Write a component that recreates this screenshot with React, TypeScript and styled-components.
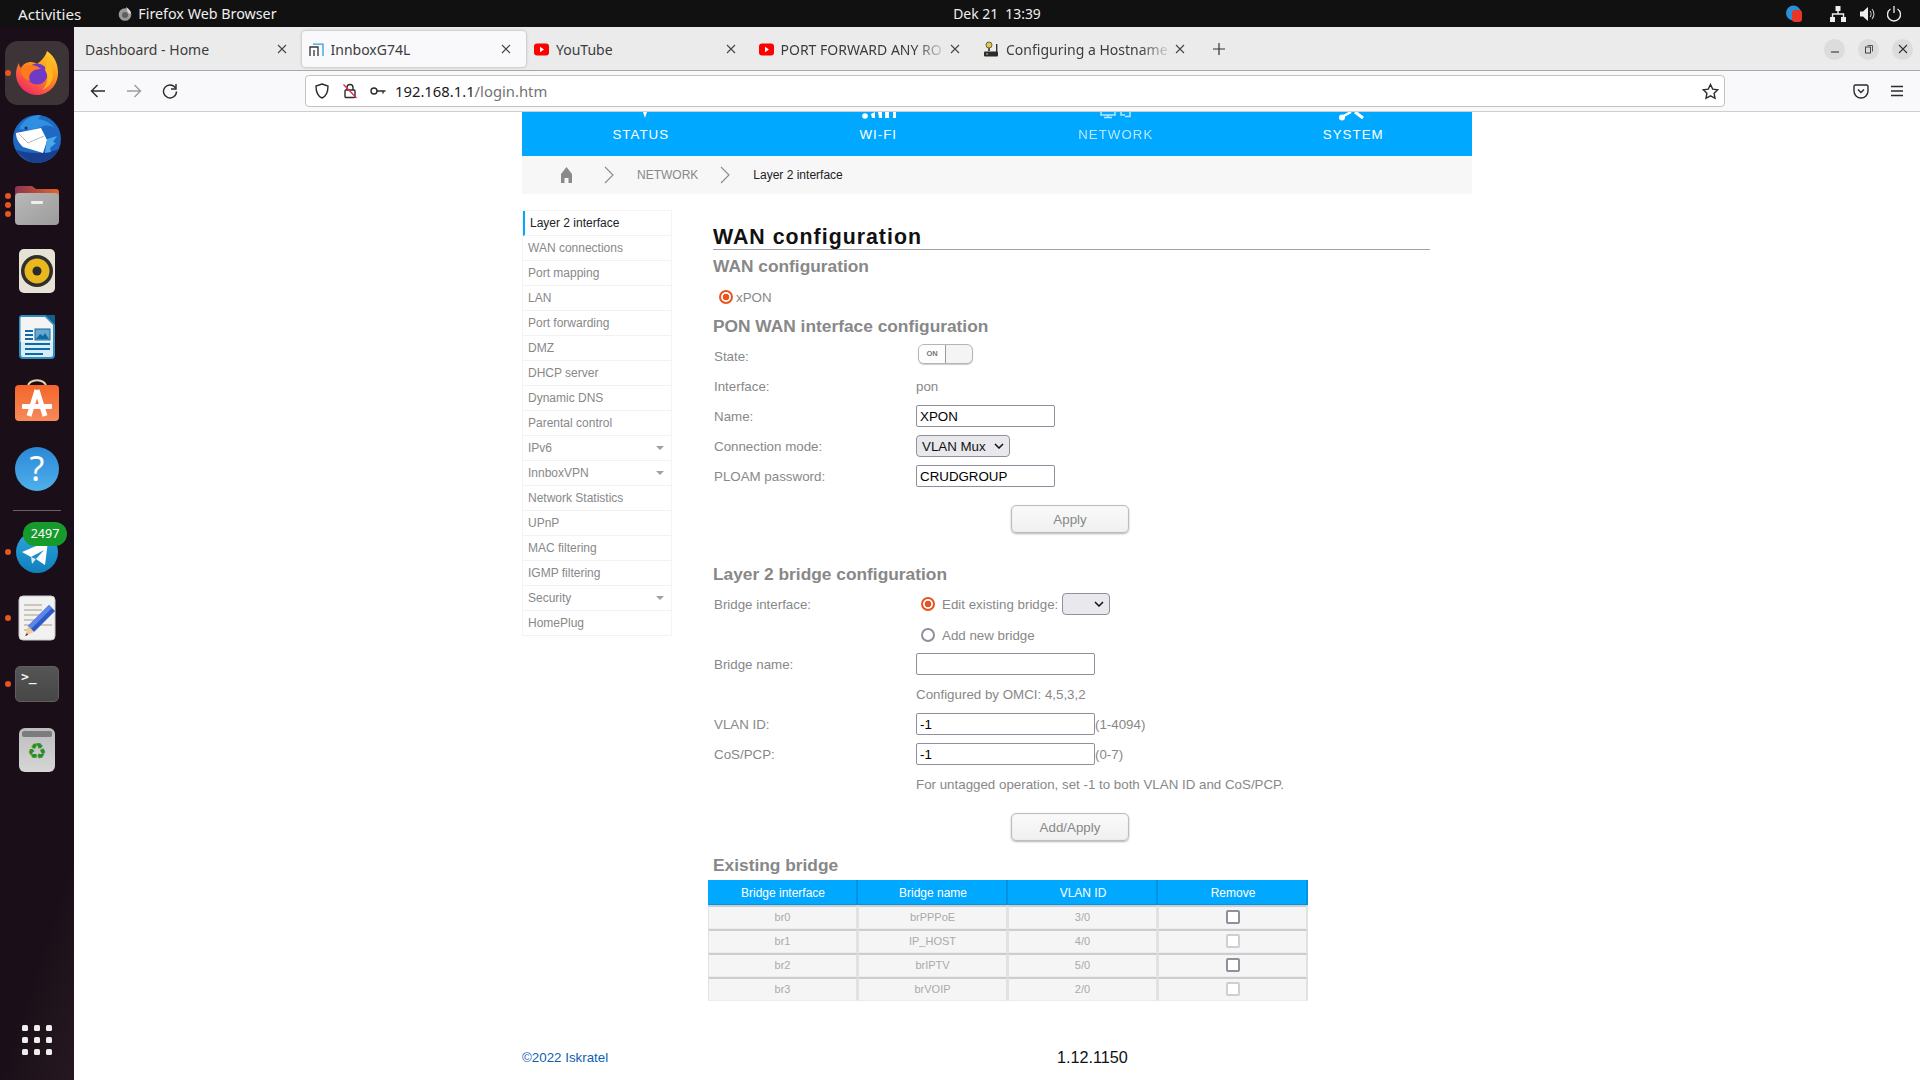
import React from "react";
import styled, { createGlobalStyle } from "styled-components";

const Global = createGlobalStyle`
  html, body { margin: 0; padding: 0; width: 1920px; height: 1080px; overflow: hidden; background: #fff; }
  * { box-sizing: border-box; }
  #root { width: 1920px; height: 1080px; }
`;

const UI = `"Noto Sans", "Open Sans", sans-serif`;
const WEB = `"Liberation Sans", Arial, sans-serif`;

const Screen = styled.div`
  width: 1920px;
  height: 1080px;
  display: flex;
  flex-direction: column;
  overflow: hidden;
`;

/* ---------- GNOME top bar ---------- */
const TopBar = styled.header`
  height: 27px;
  flex: none;
  background: #111111;
  color: #eeeeee;
  font: 14.3px ${UI};
  display: grid;
  grid-template-columns: 1fr auto 1fr;
  align-items: center;
`;
const TopLeft = styled.div`
  display: flex;
  align-items: center;
  padding-left: 18px;
`;
const Activities = styled.span`
  font-size: 15.2px;
`;
const AppMenu = styled.div`
  display: flex;
  align-items: center;
  gap: 6px;
  margin-left: 37px;
`;
const Clock = styled.div`
  white-space: pre;
  font-size: 13.9px;
  margin-left: 74px;
`;
const Tray = styled.div`
  display: flex;
  align-items: center;
  justify-content: flex-end;
  padding-right: 18px;
`;
const TrayIcon = styled.svg<{ $gap?: number }>`
  display: block;
  margin-left: ${(p) => p.$gap ?? 0}px;
`;

/* ---------- layout below the bar ---------- */
const Desk = styled.div`
  flex: 1;
  min-height: 0;
  display: flex;
`;

/* ---------- dock ---------- */
const Dock = styled.nav`
  width: 74px;
  flex: none;
  background: linear-gradient(108deg, #1a0f18 0%, #1a0f18 82%, #261821 100%);
  display: flex;
  flex-direction: column;
  align-items: center;
  padding-top: 13px;
  padding-bottom: 25px;
`;
const Slot = styled.div<{ $active?: boolean }>`
  position: relative;
  width: 74px;
  height: 66px;
  display: flex;
  align-items: center;
  justify-content: center;
  &::before {
    content: "";
    display: ${(p) => (p.$active ? "block" : "none")};
    position: absolute;
    left: 5px;
    top: 1px;
    width: 64px;
    height: 64px;
    border-radius: 13px;
    background: #3d3438;
  }
  svg { position: relative; }
`;
const Pips = styled.div`
  position: absolute;
  left: 5px;
  top: 50%;
  transform: translateY(-50%);
  display: flex;
  flex-direction: column;
  gap: 3px;
`;
const Pip = styled.span`
  display: block;
  width: 6px;
  height: 6px;
  border-radius: 50%;
  background: #e95420;
`;
const DockRule = styled.div`
  width: 48px;
  height: 1px;
  background: #6a6268;
  margin: 8px 0 8px;
  flex: none;
`;
const Badge = styled.span`
  position: absolute;
  left: 23px;
  top: 3px;
  width: 44px;
  height: 24px;
  border-radius: 12px;
  background: #169a2c;
  color: #fff;
  font: 12.5px/24px ${UI};
  text-align: center;
`;
const AppGrid = styled.div`
  margin-top: auto;
  display: grid;
  grid-template-columns: repeat(3, 6px);
  grid-auto-rows: 6px;
  gap: 6px;
`;
const AppDot = styled.span`
  background: #eeeeee;
  border-radius: 1.5px;
`;

/* ---------- browser chrome ---------- */
const Browser = styled.div`
  flex: 1;
  min-width: 0;
  display: flex;
  flex-direction: column;
`;
const TabStrip = styled.div`
  height: 44px;
  flex: none;
  background: #ebebeb;
  border-bottom: 1px solid #a9a9a9;
  display: flex;
  align-items: center;
  padding: 1px 0 0 3px;
`;
const Tab = styled.div<{ $active?: boolean }>`
  width: 224.5px;
  height: 36px;
  flex: none;
  display: flex;
  align-items: center;
  padding: 0 15px 0 ${(p) => (p.$active ? 7 : 8)}px;
  border-radius: 4px;
  background: ${(p) => (p.$active ? "#f9f9fb" : "transparent")};
  box-shadow: ${(p) => (p.$active ? "0 0 3px rgba(0,0,0,.3)" : "none")};
  color: #3c3c3c;
  font: 14px ${UI};
  gap: 7px;
`;
const TabTitle = styled.span<{ $fade?: boolean }>`
  flex: 1;
  min-width: 0;
  white-space: nowrap;
  ${(p) =>
    p.$fade
      ? `margin-right: -5px; mask-image: linear-gradient(to right, #000 80%, transparent 100%);`
      : "overflow: hidden;"}
`;
const NewTab = styled.div`
  margin-left: 12px;
  display: flex;
`;
const WinButtons = styled.div`
  margin-left: auto;
  display: flex;
  gap: 13px;
  padding-right: 7px;
`;
const WinButton = styled.div`
  width: 21px;
  height: 21px;
  border-radius: 50%;
  background: #dcdcdc;
  display: flex;
  align-items: center;
  justify-content: center;
`;
const NavBar = styled.div`
  height: 41px;
  flex: none;
  background: #f9f9fb;
  border-bottom: 1px solid #cfcfcf;
  display: flex;
  align-items: center;
  padding-left: 16px;
`;
const NavBtn = styled.div`
  width: 16px;
  height: 16px;
  margin-right: 20px;
  display: flex;
`;
const UrlBar = styled.div`
  width: 1420px;
  height: 32px;
  margin-left: 107px;
  background: #ffffff;
  border: 1px solid #c2c2c2;
  border-radius: 4px;
  display: flex;
  align-items: center;
  padding: 0 5px 0 8px;
  font: 14.8px ${UI};
`;
const UrlIcon = styled.div<{ $w?: number }>`
  width: ${(p) => p.$w ?? 28}px;
  flex: none;
  display: flex;
`;
const Host = styled.span`
  color: #1a1a1a;
`;
const Path = styled.span`
  color: #737373;
  flex: 1;
`;
const ToolIcons = styled.div`
  display: flex;
  gap: 20px;
  margin-left: 128px;
`;

/* ---------- router page ---------- */
const Page = styled.main`
  flex: 1;
  min-height: 0;
  overflow: hidden;
  background: #fff;
`;
const Sheet = styled.div`
  width: 950px;
  margin: 0 auto;
  font: 13.33px ${WEB};
  color: #888888;
`;
const MainNav = styled.div`
  height: 44px;
  background: #00a8ff;
  display: grid;
  grid-template-columns: repeat(4, 1fr);
`;
const MainNavItem = styled.div<{ $dim?: boolean }>`
  display: flex;
  flex-direction: column;
  align-items: center;
  color: #ffffff;
  opacity: ${(p) => (p.$dim ? 0.72 : 1)};
  font-size: 13.33px;
  letter-spacing: 1px;
`;
const NavGlyph = styled.svg`
  display: block;
  flex: none;
  width: 40px;
  height: 10px;
  margin-bottom: 5px;
`;
const Crumbs = styled.div`
  height: 38px;
  background: #f7f7f7;
  display: flex;
  align-items: center;
  padding-left: 38px;
  font-size: 12px;
  color: #888888;
`;
const CrumbGap = styled.span<{ $l: number }>`
  display: flex;
  margin-left: ${(p) => p.$l}px;
`;
const CrumbNow = styled.span`
  color: #222222;
`;
const Columns = styled.div`
  display: flex;
  align-items: flex-start;
`;
const SideMenu = styled.ul`
  list-style: none;
  margin: 16px 0 0;
  padding: 0;
  width: 150px;
  flex: none;
  border: 1px solid #f4f4f4;
  border-bottom-width: 0;
  font-size: 12px;
`;
const SideItem = styled.li<{ $active?: boolean }>`
  height: 25px;
  display: flex;
  align-items: center;
  justify-content: space-between;
  border-bottom: 1px solid #f2f2f2;
  padding: 0 7px 0 5px;
  color: ${(p) => (p.$active ? "#222222" : "#888888")};
  ${(p) => (p.$active ? "border-left: 2px solid #00a8ff;" : "")}
`;
const Caret = styled.span`
  width: 0;
  height: 0;
  border-left: 4px solid transparent;
  border-right: 4px solid transparent;
  border-top: 4px solid #a0a0a0;
`;
const Content = styled.section`
  width: 717px;
  margin-left: 41px;
  padding-top: 28px;
`;
const Title = styled.h1`
  margin: 0;
  height: 28px;
  border-bottom: 1px solid #a0a0a8;
  font: bold 21.33px/31px ${WEB};
  letter-spacing: 1px;
  color: #111111;
`;
const Heading = styled.h2<{ $h?: number; $top?: number; $drop?: number }>`
  margin: ${(p) => p.$top ?? 0}px 0 0;
  height: ${(p) => p.$h ?? 28}px;
  line-height: ${(p) => (p.$h ?? 28) + (p.$drop ?? 0)}px;
  font-size: 17.33px;
  font-weight: bold;
  color: #888888;
`;
const RadioLine = styled.label`
  height: 30px;
  display: flex;
  align-items: center;
  padding-left: 6px;
  gap: 3px;
`;
const Radio = styled.input.attrs({ type: "radio", readOnly: true })`
  appearance: none;
  margin: 0;
  flex: none;
  width: 14px;
  height: 14px;
  border-radius: 50%;
  border: 2px solid #8f8f9d;
  background: #fff;
  &:checked {
    border-color: #e95420;
    background: radial-gradient(circle, #e95420 0 3px, #fff 3.6px);
  }
`;
const Row = styled.div`
  height: 30px;
  display: flex;
  align-items: center;
  white-space: nowrap;
`;
const Label = styled.span`
  width: 203px;
  flex: none;
  padding-left: 1px;
`;
const Toggle = styled.div`
  width: 55px;
  height: 20px;
  margin: 0 0 4px 2px;
  display: grid;
  grid-template-columns: 27px 1fr;
  border: 1px solid #b5b5b5;
  border-radius: 6px;
  background: #f4f4f4;
  box-shadow: 0 1px 1px rgba(0, 0, 0, 0.2);
  overflow: hidden;
`;
const ToggleOn = styled.span`
  background: #fdfdfd;
  border-right: 1px solid #9a9a9a;
  font: bold 7.5px/18px ${WEB};
  text-align: center;
  color: #777777;
`;
const TextInput = styled.input.attrs({ type: "text", readOnly: true })<{ $w: number }>`
  width: ${(p) => p.$w}px;
  height: 22px;
  margin: 0;
  padding: 0 3px;
  border: 1px solid #8f8f9d;
  border-radius: 2px;
  background: #fff;
  color: #000;
  font: 13.33px ${WEB};
  outline: none;
`;
const Select = styled.div<{ $w: number; $l?: number }>`
  width: ${(p) => p.$w}px;
  height: 22px;
  margin-left: ${(p) => p.$l ?? 0}px;
  display: flex;
  align-items: center;
  justify-content: space-between;
  padding: 0 5px 0 5px;
  border: 1px solid #8f8f9d;
  border-radius: 4px;
  background: #e9e9ed;
  color: #111;
  font-size: 13.33px;
`;
const RadioField = styled.label<{ $nudge?: boolean }>`
  display: flex;
  align-items: center;
  gap: 7px;
  padding-left: 5px;
  margin-top: ${(p) => (p.$nudge ? 2 : 0)}px;
`;
const ButtonRow = styled.div<{ $top: number }>`
  padding: ${(p) => p.$top}px 0 0 298px;
`;
const Button = styled.button`
  display: block;
  width: 118px;
  height: 28px;
  padding: 0;
  border: 1px solid #bdbdbd;
  border-radius: 5px;
  background: linear-gradient(#fafafa, #f0f0f0);
  box-shadow: 0 1px 2px rgba(0, 0, 0, 0.3), inset 0 0 1px #cccccc;
  color: #888888;
  font: 13.33px ${WEB};
`;
const BridgeTable = styled.table`
  width: 600px;
  margin: 1px 0 0 -5px;
  table-layout: fixed;
  border-collapse: separate;
  border-spacing: 0;
  font-size: 11px;
`;
const Th = styled.th`
  height: 25px;
  padding: 0;
  background: #00a8ff;
  box-shadow: inset -2px 0 0 #0093e0, inset 0 -1px 0 #0093e0;
  color: #fff;
  font: normal 12px ${WEB};
  text-align: center;
`;
const Td = styled.td`
  height: 24px;
  padding: 0 0 1px;
  background: #f5f5f5;
  border-top: 2px solid #cdcdcd;
  border-left: 1px solid #e2e2e2;
  border-right: 2px solid #e2e2e2;
  border-bottom: 1px solid #ececec;
  color: #aaaaaa;
  text-align: center;
  vertical-align: middle;
`;
const Check = styled.input.attrs({ type: "checkbox", readOnly: true })`
  appearance: none;
  display: block;
  margin: 0 auto;
  width: 14px;
  height: 14px;
  border: 2px solid #8f8f9d;
  border-radius: 2px;
  background: #fff;
  &:disabled { border-color: #cfcfd3; }
`;
const Footer = styled.footer`
  margin-top: 45px;
  height: 22px;
  display: grid;
  grid-template-columns: 535px 1fr;
  align-items: center;
`;
const Copyright = styled.span`
  color: #0f5fb0;
  font-size: 13.33px;
`;
const Version = styled.span`
  color: #111;
  font-size: 16.2px;
`;

/* ---------- dock drawings ---------- */
const FirefoxIcon = () => (
  <svg width="48" height="48" viewBox="0 0 48 48">
    <defs>
      <linearGradient id="ffa" x1="0.8" y1="0" x2="0.2" y2="1">
        <stop offset="0" stopColor="#ffd02a" />
        <stop offset="0.45" stopColor="#ff8a1e" />
        <stop offset="1" stopColor="#f01f6a" />
      </linearGradient>
    </defs>
    <path d="M34 2c9 6 11 15 11 22 0 12-9.5 22-21 22S3 36 3 25c0-4 1-8 3-11 0 3 1 4 2 5 2-4 6-6 10-6 2 0 5 1 6 2 4-3 9-8 10-13z" fill="url(#ffa)" />
    <circle cx="24" cy="25" r="10.5" fill="#6f3ac8" />
    <path d="M8 21c4-5 10-6 15-4 3 1 5 3 5 3s-5 0-8 2c-3 2-5 6-3 10-6-2-9-6-9-11z" fill="#ff7a18" />
    <path d="M34 12c5 4 6 10 6 14 0 7-5 13-11 15 6-5 7-14 3-20z" fill="#ffb51e" />
  </svg>
);
const ThunderbirdIcon = () => (
  <svg width="48" height="48" viewBox="0 0 48 48">
    <circle cx="24" cy="24" r="24" fill="#1d69c4" />
    <path d="M3 35c6 8 14 13 21 13 9 0 18-5 22-14-8 4-28 6-43 1z" fill="#1b3f8f" />
    <path d="M6 14C10 5 18 0 28 0l-3 4c7 1 13 4 17 9-6-3-10-3-14-1-7 3-15 3-22 2z" fill="#2f8fe0" />
    <circle cx="13" cy="13" r="1.500" fill="#12306e" />
    <path d="M3 18l25-5 6 12c-1 5-3 9-4 13L10 32C6 28 3 24 3 18z" fill="#ffffff" />
    <path d="M6 19l9 9 16-7" fill="none" stroke="#b4b4c0" strokeWidth="1" />
    <path d="M34 24l10-3-4 6 3 1-6 5 1 4-6 1z" fill="#49a7ea" />
  </svg>
);
const FilesIcon = () => (
  <svg width="48" height="48" viewBox="0 0 48 48">
    <defs>
      <linearGradient id="fold" x1="0" y1="0" x2="1" y2="0">
        <stop offset="0" stopColor="#8b3550" />
        <stop offset="1" stopColor="#e4642a" />
      </linearGradient>
      <linearGradient id="foldf" x1="0" y1="0" x2="1" y2="1">
        <stop offset="0" stopColor="#b8b8b8" />
        <stop offset="1" stopColor="#9c9c9c" />
      </linearGradient>
    </defs>
    <path d="M2 8a3 3 0 0 1 3-3h14l4 3h20a3 3 0 0 1 3 3v6H2z" fill="url(#fold)" />
    <rect x="2" y="12" width="44" height="32" rx="4" fill="url(#foldf)" />
    <rect x="18" y="20" width="12" height="3" rx="1" fill="#eeeeee" />
  </svg>
);
const RhythmboxIcon = () => (
  <svg width="48" height="48" viewBox="0 0 48 48">
    <rect x="6" y="2" width="36" height="44" rx="5" fill="#e6e2d5" />
    <circle cx="24" cy="24" r="16" fill="#2f2f2f" />
    <circle cx="24" cy="24" r="12.5" fill="#e8b81e" />
    <circle cx="24" cy="24" r="4.5" fill="#2b2b2b" />
  </svg>
);
const WriterIcon = () => (
  <svg width="48" height="48" viewBox="0 0 48 48">
    <path d="M9 2h24l9 9v31a4 4 0 0 1-4 4H10a4 4 0 0 1-4-4V5a3 3 0 0 1 3-3z" fill="#2c8fbf" />
    <path d="M8 4h24l8 8v17H7.500V5z" fill="#f4f4f4" />
    <path d="M8 29h32v13a2 2 0 0 1-2 2H10a2 2 0 0 1-2-2z" fill="#d8edf6" />
    <path d="M33 2l9 9V3a1 1 0 0 0-1-1z" fill="#155f8e" />
    <rect x="12" y="17" width="8" height="2" fill="#0e6aa8" />
    <rect x="12" y="21" width="8" height="2" fill="#0e6aa8" />
    <rect x="12" y="25" width="8" height="2" fill="#0e6aa8" />
    <rect x="12" y="30" width="25" height="2" fill="#0e6aa8" />
    <rect x="12" y="35" width="25" height="2" fill="#0e6aa8" />
    <rect x="12" y="40" width="18" height="2" fill="#0e6aa8" />
    <rect x="22" y="16" width="15" height="11" fill="#6aa7cc" stroke="#0e6aa8" strokeWidth="1" />
    <path d="M23 26l4-5 3 2 2-3 4 6z" fill="#0e6aa8" />
  </svg>
);
const StoreIcon = () => (
  <svg width="48" height="48" viewBox="0 0 48 48">
    <defs>
      <linearGradient id="bag" x1="0" y1="0" x2="0" y2="1">
        <stop offset="0" stopColor="#f5652a" />
        <stop offset="1" stopColor="#f68a5c" />
      </linearGradient>
    </defs>
    <path d="M15 8c0-9 18-9 18 0" fill="none" stroke="#e8d2b0" strokeWidth="2" />
    <rect x="2" y="6" width="44" height="36" rx="4" fill="url(#bag)" />
    <path d="M24 11l-8 26M24 11l8 26" fill="none" stroke="#fff" strokeWidth="5" />
    <rect x="9" y="25" width="30" height="5" rx="1" fill="#fff" />
  </svg>
);
const HelpSvg = styled.svg`
  font-family: "Noto Sans", sans-serif;
`;
const HelpIcon = () => (
  <HelpSvg width="48" height="48" viewBox="0 0 48 48">
    <defs>
      <linearGradient id="hlp" x1="0" y1="0" x2="0" y2="1">
        <stop offset="0" stopColor="#2b88d8" />
        <stop offset="1" stopColor="#4fb0ea" />
      </linearGradient>
    </defs>
    <circle cx="24" cy="24" r="22" fill="url(#hlp)" />
    <text x="24" y="36" textAnchor="middle" fontSize="34" fill="#fff">?</text>
  </HelpSvg>
);
const TelegramIcon = () => (
  <svg width="48" height="48" viewBox="0 0 48 48">
    <defs>
      <linearGradient id="tg" x1="0" y1="0" x2="0" y2="1">
        <stop offset="0" stopColor="#2fa5de" />
        <stop offset="1" stopColor="#0f7fbb" />
      </linearGradient>
    </defs>
    <circle cx="24" cy="24" r="21" fill="url(#tg)" />
    <path d="M9 24l26-11-3 24-9-6 8-9-13 7z" fill="#fff" />
    <path d="M18 29l5 2-4 5z" fill="#d5e8f3" />
  </svg>
);
const GeditIcon = () => (
  <svg width="48" height="48" viewBox="0 0 48 48">
    <rect x="6" y="2" width="36" height="44" rx="4" fill="#f1f1f1" stroke="#c9c9c9" strokeWidth="1" />
    <g fill="#cbc6b8">
      <rect x="11" y="10" width="18" height="2" />
      <rect x="11" y="15" width="18" height="2" />
      <rect x="11" y="20" width="18" height="2" />
      <rect x="11" y="25" width="14" height="2" />
      <rect x="11" y="30" width="28" height="2" />
      <rect x="11" y="35" width="10" height="2" />
    </g>
    <path d="M36 11l6 6-21 21-6-6z" fill="#2b59c9" />
    <path d="M36 11l3 3-21 21-3-3z" fill="#5f86e6" />
    <path d="M15 32l6 6-9 4z" fill="#f2c79a" />
    <path d="M14 39l-2 3 3-1z" fill="#333" />
  </svg>
);
const TermBox = styled.div`
  width: 44px;
  height: 36px;
  border-radius: 5px;
  background: linear-gradient(#555555, #464646);
  border: 1px solid #5f5f5f;
  color: #f3f3f3;
  font: bold 13px/20px "DejaVu Sans Mono", monospace;
  padding-left: 5px;
`;
const TrashBox = styled.div`
  width: 36px;
  height: 44px;
  border-radius: 6px;
  background: linear-gradient(#bdbdbd, #d6d6d6);
  display: flex;
  flex-direction: column;
  align-items: center;
  padding-top: 3px;
`;
const TrashLid = styled.span`
  width: 30px;
  height: 6px;
  border-radius: 2px;
  background: #7c7c7c;
`;
const TrashMark = styled.span`
  font: 22px/30px "DejaVu Sans", sans-serif;
  color: #2a8f22;
`;

/* ---------- chrome glyphs ---------- */
const S = { fill: "none", stroke: "#2b2b2b", strokeWidth: 1.4 } as const;
const CloseX = ({ c = "#444" }: { c?: string }) => (
  <svg width="10" height="10" viewBox="0 0 10 10" style={{ flex: "none" }}>
    <path d="M1 1l8 8M9 1L1 9" stroke={c} strokeWidth="1.1" fill="none" />
  </svg>
);
const YouTubeFav = () => (
  <svg width="15" height="15" viewBox="0 0 15 15" style={{ flex: "none" }}>
    <rect x="0" y="1.5" width="15" height="12" rx="3" fill="#ff0000" />
    <path d="M6 4.8l4 2.7-4 2.7z" fill="#fff" />
  </svg>
);
const InnboxFav = () => (
  <svg width="15" height="15" viewBox="0 0 15 15" style={{ flex: "none" }}>
    <path d="M1 14V5h8v9" fill="none" stroke="#333" strokeWidth="1.3" />
    <path d="M5 14V8" stroke="#333" strokeWidth="1.3" />
    <path d="M4 2.2h10V14" fill="none" stroke="#2aa0dd" strokeWidth="1.3" />
  </svg>
);
const RouterFav = () => (
  <svg width="16" height="16" viewBox="0 0 16 16" style={{ flex: "none" }}>
    <circle cx="6" cy="4" r="3" fill="#e8c93a" stroke="#444" strokeWidth="0.8" />
    <rect x="5" y="7" width="2" height="3" fill="#555" />
    <rect x="13" y="3" width="1.4" height="8" fill="#333" />
    <rect x="1" y="10.5" width="14" height="5" rx="1" fill="#2b2b2b" />
    <rect x="3" y="12.5" width="2" height="1" fill="#e8c93a" />
  </svg>
);

const menu = [
  "Layer 2 interface",
  "WAN connections",
  "Port mapping",
  "LAN",
  "Port forwarding",
  "DMZ",
  "DHCP server",
  "Dynamic DNS",
  "Parental control",
  "IPv6",
  "InnboxVPN",
  "Network Statistics",
  "UPnP",
  "MAC filtering",
  "IGMP filtering",
  "Security",
  "HomePlug",
];
const carets = new Set(["IPv6", "InnboxVPN", "Security"]);
const bridges = [
  ["br0", "brPPPoE", "3/0", false],
  ["br1", "IP_HOST", "4/0", true],
  ["br2", "brIPTV", "5/0", false],
  ["br3", "brVOIP", "2/0", true],
] as const;

const Chevron = () => (
  <svg width="10" height="18" viewBox="0 0 10 18">
    <path d="M1 1l8 8-8 8" fill="none" stroke="#8a8a8a" strokeWidth="1.1" />
  </svg>
);

export default function App() {
  return (
    <Screen>
      <Global />
      <TopBar>
        <TopLeft>
          <Activities>Activities</Activities>
          <AppMenu>
            <svg width="14" height="14" viewBox="0 0 14 14">
              <circle cx="7" cy="7.5" r="6.3" fill="#9a9a9a" />
              <circle cx="7" cy="8" r="3" fill="#5e5e5e" />
              <path d="M8 0c3 2 5 4 5 7l-3-1z" fill="#d8d8d8" />
            </svg>
            <span>Firefox Web Browser</span>
          </AppMenu>
        </TopLeft>
        <Clock>Dek 21  13:39</Clock>
        <Tray>
          <TrayIcon width="16" height="18" viewBox="0 0 16 18">
            <circle cx="7.5" cy="8" r="7.5" fill="#2a8fd8" />
            <rect x="6" y="5" width="10" height="12" rx="3" fill="#e8352a" />
          </TrayIcon>
          <TrayIcon $gap={28} width="16" height="16" viewBox="0 0 16 16">
            <path d="M5.5 0h5v5h-5zM0 11h5v5H0zM11 11h5v5h-5z" fill="#eee" />
            <path d="M8 5v3M2.5 11V8h11v3" fill="none" stroke="#eee" strokeWidth="1.4" />
          </TrayIcon>
          <TrayIcon $gap={14} width="16" height="16" viewBox="0 0 16 16">
            <path d="M0 5.5h3L8 1v14L3 10.5H0z" fill="#eee" />
            <path d="M10 5c1.4 1.6 1.4 4.4 0 6M12 3c2.6 2.8 2.6 7.200 0 10" fill="none" stroke="#ccc" strokeWidth="1.1" />
          </TrayIcon>
          <TrayIcon $gap={10} width="16" height="16" viewBox="0 0 16 16">
            <path d="M4.500 3a6.500 6.500 0 1 0 7 0M8 0v7" fill="none" stroke="#eee" strokeWidth="1.3" />
          </TrayIcon>
        </Tray>
      </TopBar>

      <Desk>
        <Dock>
          <Slot $active>
            <Pips><Pip /></Pips>
            <FirefoxIcon />
          </Slot>
          <Slot><ThunderbirdIcon /></Slot>
          <Slot>
            <Pips><Pip /><Pip /><Pip /></Pips>
            <FilesIcon />
          </Slot>
          <Slot><RhythmboxIcon /></Slot>
          <Slot><WriterIcon /></Slot>
          <Slot><StoreIcon /></Slot>
          <Slot><HelpIcon /></Slot>
          <DockRule />
          <Slot>
            <Pips><Pip /></Pips>
            <TelegramIcon />
            <Badge>2497</Badge>
          </Slot>
          <Slot>
            <Pips><Pip /></Pips>
            <GeditIcon />
          </Slot>
          <Slot>
            <Pips><Pip /></Pips>
            <TermBox>&gt;_</TermBox>
          </Slot>
          <Slot>
            <TrashBox>
              <TrashLid />
              <TrashMark>♻</TrashMark>
            </TrashBox>
          </Slot>
          <AppGrid>
            {Array.from({ length: 9 }, (_, i) => (
              <AppDot key={i} />
            ))}
          </AppGrid>
        </Dock>

        <Browser>
          <TabStrip>
            <Tab>
              <TabTitle>Dashboard - Home</TabTitle>
              <CloseX />
            </Tab>
            <Tab $active>
              <InnboxFav />
              <TabTitle>InnboxG74L</TabTitle>
              <CloseX />
            </Tab>
            <Tab>
              <YouTubeFav />
              <TabTitle>YouTube</TabTitle>
              <CloseX />
            </Tab>
            <Tab>
              <YouTubeFav />
              <TabTitle $fade>PORT FORWARD ANY RO</TabTitle>
              <CloseX />
            </Tab>
            <Tab>
              <RouterFav />
              <TabTitle $fade>Configuring a Hostname a</TabTitle>
              <CloseX />
            </Tab>
            <NewTab>
              <svg width="14" height="14" viewBox="0 0 14 14">
                <path d="M7 1v12M1 7h12" stroke="#333" strokeWidth="1.2" />
              </svg>
            </NewTab>
            <WinButtons>
              <WinButton>
                <svg width="10" height="10" viewBox="0 0 10 10">
                  <path d="M1 8h8" stroke="#444" strokeWidth="1.2" />
                </svg>
              </WinButton>
              <WinButton>
                <svg width="10" height="10" viewBox="0 0 10 10">
                  <rect x="1.500" y="3" width="5" height="6" fill="none" stroke="#444" strokeWidth="1" />
                  <path d="M3.500 1.500h5v6" fill="none" stroke="#444" strokeWidth="0.9" />
                </svg>
              </WinButton>
              <WinButton>
                <CloseX c="#333" />
              </WinButton>
            </WinButtons>
          </TabStrip>

          <NavBar>
            <NavBtn>
              <svg width="16" height="16" viewBox="0 0 16 16">
                <path d="M15 8H1.500M7.500 2L1.500 8l6 6" {...S} />
              </svg>
            </NavBtn>
            <NavBtn>
              <svg width="16" height="16" viewBox="0 0 16 16">
                <path d="M1 8h13.500M8.500 2l6 6-6 6" {...S} stroke="#9d9d9d" />
              </svg>
            </NavBtn>
            <NavBtn>
              <svg width="16" height="16" viewBox="0 0 16 16">
                <path d="M13.500 5A6.500 6.500 0 1 0 14.500 8.500" {...S} />
                <path d="M14 1v5H9" {...S} />
              </svg>
            </NavBtn>
            <UrlBar>
              <UrlIcon>
                <svg width="16" height="16" viewBox="0 0 16 16">
                  <path d="M8 1l6 2c0 6-1 10-6 12C3 13 2 9 2 3z" {...S} />
                </svg>
              </UrlIcon>
              <UrlIcon>
                <svg width="16" height="16" viewBox="0 0 16 16">
                  <rect x="3" y="7" width="10" height="7.500" rx="1" {...S} />
                  <path d="M5 7V4.500a3 3 0 0 1 6 0V7" {...S} />
                  <path d="M1.500 1.500l13 13.500" stroke="#e22850" strokeWidth="1.3" />
                </svg>
              </UrlIcon>
              <UrlIcon $w={25}>
                <svg width="16" height="16" viewBox="0 0 16 16">
                  <circle cx="4" cy="8" r="3" {...S} />
                  <path d="M7 8h8.500M13 8v2.500" {...S} />
                </svg>
              </UrlIcon>
              <Host>192.168.1.1</Host>
              <Path>/login.htm</Path>
              <svg width="17" height="17" viewBox="0 0 17 17">
                <path d="M8.500 1.500l2.200 4.600 5 .7-3.600 3.500.9 5-4.500-2.400L4 15.300l.9-5L1.300 6.800l5-.7z" {...S} />
              </svg>
            </UrlBar>
            <ToolIcons>
              <svg width="16" height="16" viewBox="0 0 16 16">
                <path d="M2.500 2h11A1.500 1.500 0 0 1 15 3.500V8a7 7 0 0 1-14 0V3.500A1.500 1.500 0 0 1 2.500 2z" {...S} />
                <path d="M5 6.500L8 9.500l3-3" {...S} />
              </svg>
              <svg width="16" height="16" viewBox="0 0 16 16">
                <path d="M2 3.500h12M2 8h12M2 12.500h12" {...S} />
              </svg>
            </ToolIcons>
          </NavBar>

          <Page>
            <Sheet>
              <MainNav>
                <MainNavItem>
                  <NavGlyph viewBox="0 0 40 10">
                    <path d="M22 0h4l-2 6z" fill="#fff" />
                  </NavGlyph>
                  STATUS
                </MainNavItem>
                <MainNavItem>
                  <NavGlyph viewBox="0 0 40 10">
                    <circle cx="7" cy="4" r="2.800" fill="#fff" />
                    <path d="M13 2l4-2v6h-3zM20 0h4v6h-3zM27 0h4v6h-4zM35 0h3v6h-3z" fill="#fff" />
                  </NavGlyph>
                  WI-FI
                </MainNavItem>
                <MainNavItem $dim>
                  <NavGlyph viewBox="0 0 40 10">
                    <path d="M5 0v3h14V0M12 3v2M8 5.500h8M25 0v3h4M29 4.500h5V0" fill="none" stroke="#fff" strokeWidth="1.500" />
                  </NavGlyph>
                  NETWORK
                </MainNavItem>
                <MainNavItem>
                  <NavGlyph viewBox="0 0 40 10">
                    <path d="M18 0l-9 5" stroke="#fff" strokeWidth="2.500" fill="none" />
                    <circle cx="9" cy="5.500" r="3" fill="#fff" />
                    <path d="M22 0l8 6" stroke="#fff" strokeWidth="3.200" fill="none" />
                  </NavGlyph>
                  SYSTEM
                </MainNavItem>
              </MainNav>
              <Crumbs>
                <svg width="13" height="16" viewBox="0 0 13 16">
                  <path d="M6.500 0L12 7v9H8.500v-5h-4v5H1V7z" fill="#8a8a8a" />
                </svg>
                <CrumbGap $l={31}><Chevron /></CrumbGap>
                <CrumbGap $l={23}>NETWORK</CrumbGap>
                <CrumbGap $l={22}><Chevron /></CrumbGap>
                <CrumbGap $l={23}><CrumbNow>Layer 2 interface</CrumbNow></CrumbGap>
              </Crumbs>
              <Columns>
                <SideMenu>
                  {menu.map((m, i) => (
                    <SideItem key={m} $active={i === 0}>
                      {m}
                      {carets.has(m) && <Caret />}
                    </SideItem>
                  ))}
                </SideMenu>
                <Content>
                  <Title>WAN configuration</Title>
                  <Heading $h={32}>WAN configuration</Heading>
                  <RadioLine>
                    <Radio checked />
                    xPON
                  </RadioLine>
                  <Heading $h={29}>PON WAN interface configuration</Heading>
                  <Row>
                    <Label>State:</Label>
                    <Toggle>
                      <ToggleOn>ON</ToggleOn>
                    </Toggle>
                  </Row>
                  <Row>
                    <Label>Interface:</Label>
                    pon
                  </Row>
                  <Row>
                    <Label>Name:</Label>
                    <TextInput $w={139} value="XPON" />
                  </Row>
                  <Row>
                    <Label>Connection mode:</Label>
                    <Select $w={94}>
                      VLAN Mux
                      <svg width="10" height="6" viewBox="0 0 10 6">
                        <path d="M1 1l4 4 4-4" fill="none" stroke="#111" strokeWidth="1.500" />
                      </svg>
                    </Select>
                  </Row>
                  <Row>
                    <Label>PLOAM password:</Label>
                    <TextInput $w={139} value="CRUDGROUP" />
                  </Row>
                  <ButtonRow $top={14}>
                    <Button>Apply</Button>
                  </ButtonRow>

                  <Heading $top={28} $drop={-2}>Layer 2 bridge configuration</Heading>
                  <Row>
                    <Label>Bridge interface:</Label>
                    <RadioField>
                      <Radio checked />
                      Edit existing bridge:
                    </RadioField>
                    <Select $w={48} $l={4}>
                      <span />
                      <svg width="10" height="6" viewBox="0 0 10 6">
                        <path d="M1 1l4 4 4-4" fill="none" stroke="#111" strokeWidth="1.500" />
                      </svg>
                    </Select>
                  </Row>
                  <Row>
                    <Label />
                    <RadioField $nudge>
                      <Radio />
                      Add new bridge
                    </RadioField>
                  </Row>
                  <Row>
                    <Label>Bridge name:</Label>
                    <TextInput $w={179} value="" />
                  </Row>
                  <Row>
                    <Label />
                    Configured by OMCI: 4,5,3,2
                  </Row>
                  <Row>
                    <Label>VLAN ID:</Label>
                    <TextInput $w={179} value="-1" />
                    (1-4094)
                  </Row>
                  <Row>
                    <Label>CoS/PCP:</Label>
                    <TextInput $w={179} value="-1" />
                    (0-7)
                  </Row>
                  <Row>
                    <Label />
                    For untagged operation, set -1 to both VLAN ID and CoS/PCP.
                  </Row>
                  <ButtonRow $top={14}>
                    <Button>Add/Apply</Button>
                  </ButtonRow>

                  <Heading $top={10}>Existing bridge</Heading>
                  <BridgeTable>
                    <thead>
                      <tr>
                        <Th>Bridge interface</Th>
                        <Th>Bridge name</Th>
                        <Th>VLAN ID</Th>
                        <Th>Remove</Th>
                      </tr>
                    </thead>
                    <tbody>
                      {bridges.map(([a, b, c, dis]) => (
                        <tr key={a}>
                          <Td>{a}</Td>
                          <Td>{b}</Td>
                          <Td>{c}</Td>
                          <Td>
                            <Check disabled={dis} />
                          </Td>
                        </tr>
                      ))}
                    </tbody>
                  </BridgeTable>
                </Content>
              </Columns>
              <Footer>
                <Copyright>©2022 Iskratel</Copyright>
                <Version>1.12.1150</Version>
              </Footer>
            </Sheet>
          </Page>
        </Browser>
      </Desk>
    </Screen>
  );
}
